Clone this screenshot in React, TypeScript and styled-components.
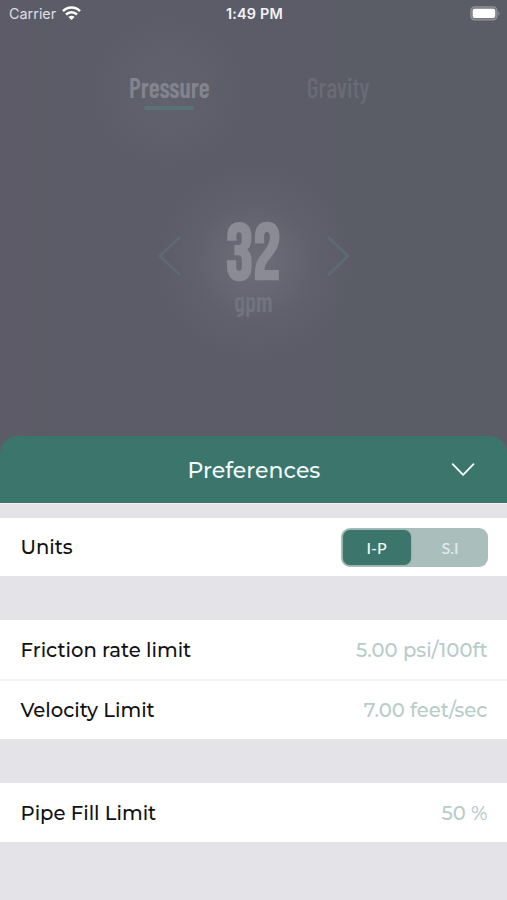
import React from "react";
import styled, { createGlobalStyle } from "styled-components";

const GlobalStyle = createGlobalStyle`
  * { box-sizing: border-box; }
  body { margin: 0; font-family: Montserrat, Inter, sans-serif; }
  button { border: 0; padding: 0; background: none; font: inherit; }
`;

const Screen = styled.main`
  width: 100%;
  height: 900px;
  display: flex;
  flex-direction: column;
  overflow: hidden;
  background: #5c5c67;
`;

const Backdrop = styled.section`
  height: 436px;
  flex: none;
  background:
    radial-gradient(circle at 254px 262px, rgba(129, 129, 140, 0.46) 0, rgba(125, 125, 137, 0.34) 32px, rgba(119, 119, 132, 0.14) 62px, transparent 100px),
    radial-gradient(circle at 168px 92px, rgba(115, 117, 128, 0.26), transparent 78px),
    linear-gradient(90deg, #5d5b67 0, #5b5c67 12%, #5b5c67 60%, #5a5c66 100%);
`;

const StatusBar = styled.header`
  height: 27px;
  padding: 0 7px 0 9px;
  display: grid;
  grid-template-columns: 1fr auto 1fr;
  align-items: center;
  font-family: Inter, sans-serif;
  color: #f4f4f7;
`;

const Carrier = styled.div`
  display: flex;
  align-items: center;
  gap: 6px;
  font-size: 14.4px;
  color: #dfdfe4;
`;

const Clock = styled.time`
  font-size: 14.4px;
  font-weight: 600;
  letter-spacing: 0.2px;
`;

const BatteryIcon = styled.svg`
  justify-self: end;
  display: block;
`;

const Tabs = styled.nav`
  height: 93px;
  padding-top: 43px;
  display: grid;
  grid-template-columns: 84px 84px;
  justify-content: center;
  column-gap: 85px;
`;

const Tab = styled.button<{ $active?: boolean }>`
  display: flex;
  flex-direction: column;
  align-items: center;
  font: ${(p) => (p.$active ? 600 : 500)} 29.5px/32px "Barlow Condensed", Roboto, sans-serif;
  color: ${(p) => (p.$active ? "#83848e" : "#6a6b76")};
`;

const Condensed = styled.span<{ $scale: number }>`
  display: block;
  transform: scaleX(${(p) => p.$scale});
`;

const TabUnderline = styled.span`
  width: 50px;
  height: 4px;
  margin-top: 4px;
  border-radius: 2px;
  background: #5b7178;
`;

const Stepper = styled.div`
  margin-top: 102px;
  display: grid;
  grid-template-columns: 24px 100px 24px;
  justify-content: center;
  column-gap: 22px;
`;

const StepButton = styled.button`
  height: 40px;
  margin-top: 14px;
  color: #5d6973;
`;

const Reading = styled.div`
  padding-top: 3px;
  display: flex;
  flex-direction: column;
  align-items: center;
`;

const Amount = styled.div`
  font: 700 78px/62px "Bebas Neue", Roboto, sans-serif;
  color: #8b8b96;
`;

const Unit = styled.div`
  margin-top: -2px;
  font: 600 28px/32px "Barlow Condensed", Roboto, sans-serif;
  color: #72737e;
`;

const Sheet = styled.section`
  flex: 1;
  background: #e4e3e8;
`;

const HeaderBacking = styled.div`
  background: #5c5c67;
`;

const SheetHeader = styled.header`
  height: 67px;
  padding-right: 32px;
  display: grid;
  grid-template-columns: 57px 1fr 24px;
  align-items: center;
  border-radius: 18px 18px 0 0;
  background: #3b756c;
  color: #f1fbf9;
`;

const SheetTitle = styled.h1`
  margin: 1px 0 0;
  text-align: center;
  font-size: 22px;
  font-weight: 500;
`;

const CloseButton = styled.button`
  height: 24px;
  color: #f1fbf9;
`;

const Groups = styled.div`
  padding-top: 13.5px;
  border-top: 1px solid #f1f2f4;
  display: flex;
  flex-direction: column;
  gap: 44px;
`;

const Group = styled.div`
  display: flex;
  flex-direction: column;
  gap: 2px;
  background: #f3f3f5;
`;

const Row = styled.div`
  height: 58.5px;
  padding: 1px 19.5px 0 20.5px;
  display: flex;
  align-items: center;
  justify-content: space-between;
  background: #fff;
  font-size: 19.6px;
  font-weight: 500;
  white-space: nowrap;
`;

const RowLabel = styled.span`
  color: #111;
`;

const RowValue = styled.span`
  color: #b8ccc8;
`;

const Toggle = styled.div`
  width: 147px;
  height: 39px;
  padding: 2px;
  display: grid;
  grid-template-columns: 68px 1fr;
  border-radius: 9px;
  background: #aabfbb;
`;

const ToggleOption = styled.button<{ $selected?: boolean }>`
  border-radius: 7px;
  background: ${(p) => (p.$selected ? "#3b756c" : "transparent")};
  box-shadow: ${(p) => (p.$selected ? "0 0 2px rgba(59, 117, 108, 0.5)" : "none")};
  color: ${(p) => (p.$selected ? "#f0faf8" : "#e3eceb")};
  padding: 1px 0 0 ${(p) => (p.$selected ? "0" : "4px")};
  font-family: Lato, sans-serif;
  font-size: 16px;
  font-weight: 500;
`;

const WifiIcon = () => (
  <svg width="19" height="15" viewBox="0 0 19 15" fill="none" stroke="#fff" strokeWidth="2.5">
    <path d="M1 5.1C5.7.4 13.3.4 18 5.1" />
    <path d="M4 8.5c3.1-3 7.9-3 11 0" />
    <path d="M6.4 10.9 9.5 14l3.1-3.1c-1.8-1.5-4.4-1.5-6.2 0Z" fill="#fff" stroke="none" />
  </svg>
);

const Battery = () => (
  <BatteryIcon width="30" height="15" viewBox="0 0 30 15">
    <rect x=".9" y=".9" width="26" height="13" rx="3.8" fill="#777781" stroke="#92929b" strokeWidth="1.2" />
    <rect x="2.7" y="2.7" width="22.5" height="9.4" rx="2" fill="#fff" />
    <path d="M28.3 5.2c1.6.7 1.6 3.8 0 4.5Z" fill="#92929b" />
  </BatteryIcon>
);

const StepArrow = ({ d }: { d: string }) => (
  <svg width="24" height="40" viewBox="0 0 24 40" fill="none" stroke="currentColor" strokeWidth="3">
    <path d={d} />
  </svg>
);

interface Setting {
  label: string;
  value: string;
}

const settingGroups: Setting[][] = [
  [
    { label: "Friction rate limit", value: "5.00 psi/100ft" },
    { label: "Velocity Limit", value: "7.00 feet/sec" },
  ],
  [{ label: "Pipe Fill Limit", value: "50 %" }],
];

export default function App() {
  return (
    <>
      <GlobalStyle />
      <Screen>
        <Backdrop>
          <StatusBar>
            <Carrier>
              Carrier
              <WifiIcon />
            </Carrier>
            <Clock>1:49 PM</Clock>
            <Battery />
          </StatusBar>
          <Tabs>
            <Tab $active>
              <Condensed $scale={0.87}>Pressure</Condensed>
              <TabUnderline />
            </Tab>
            <Tab>
              <Condensed $scale={0.87}>Gravity</Condensed>
            </Tab>
          </Tabs>
          <Stepper>
            <StepButton aria-label="Decrease">
              <StepArrow d="M22 1 2 20l20 19" />
            </StepButton>
            <Reading>
              <Amount>
                <Condensed $scale={0.88}>32</Condensed>
              </Amount>
              <Unit>
                <Condensed $scale={0.89}>gpm</Condensed>
              </Unit>
            </Reading>
            <StepButton aria-label="Increase">
              <StepArrow d="m2 1 20 19L2 39" />
            </StepButton>
          </Stepper>
        </Backdrop>
        <Sheet>
          <HeaderBacking>
            <SheetHeader>
              <span />
              <SheetTitle>Preferences</SheetTitle>
              <CloseButton aria-label="Close preferences">
                <svg width="24" height="24" viewBox="0 0 24 24" fill="none" stroke="currentColor" strokeWidth="1.9" strokeLinecap="round" strokeLinejoin="round">
                  <path d="m1.7 6.2 10.4 10.7L22.5 6.2" />
                </svg>
              </CloseButton>
            </SheetHeader>
          </HeaderBacking>
          <Groups>
            <Group>
              <Row>
                <RowLabel>Units</RowLabel>
                <Toggle>
                  <ToggleOption $selected>I-P</ToggleOption>
                  <ToggleOption>S.I</ToggleOption>
                </Toggle>
              </Row>
            </Group>
            {settingGroups.map((group) => (
              <Group key={group[0].label}>
                {group.map((setting) => (
                  <Row key={setting.label}>
                    <RowLabel>{setting.label}</RowLabel>
                    <RowValue>{setting.value}</RowValue>
                  </Row>
                ))}
              </Group>
            ))}
          </Groups>
        </Sheet>
      </Screen>
    </>
  );
}
